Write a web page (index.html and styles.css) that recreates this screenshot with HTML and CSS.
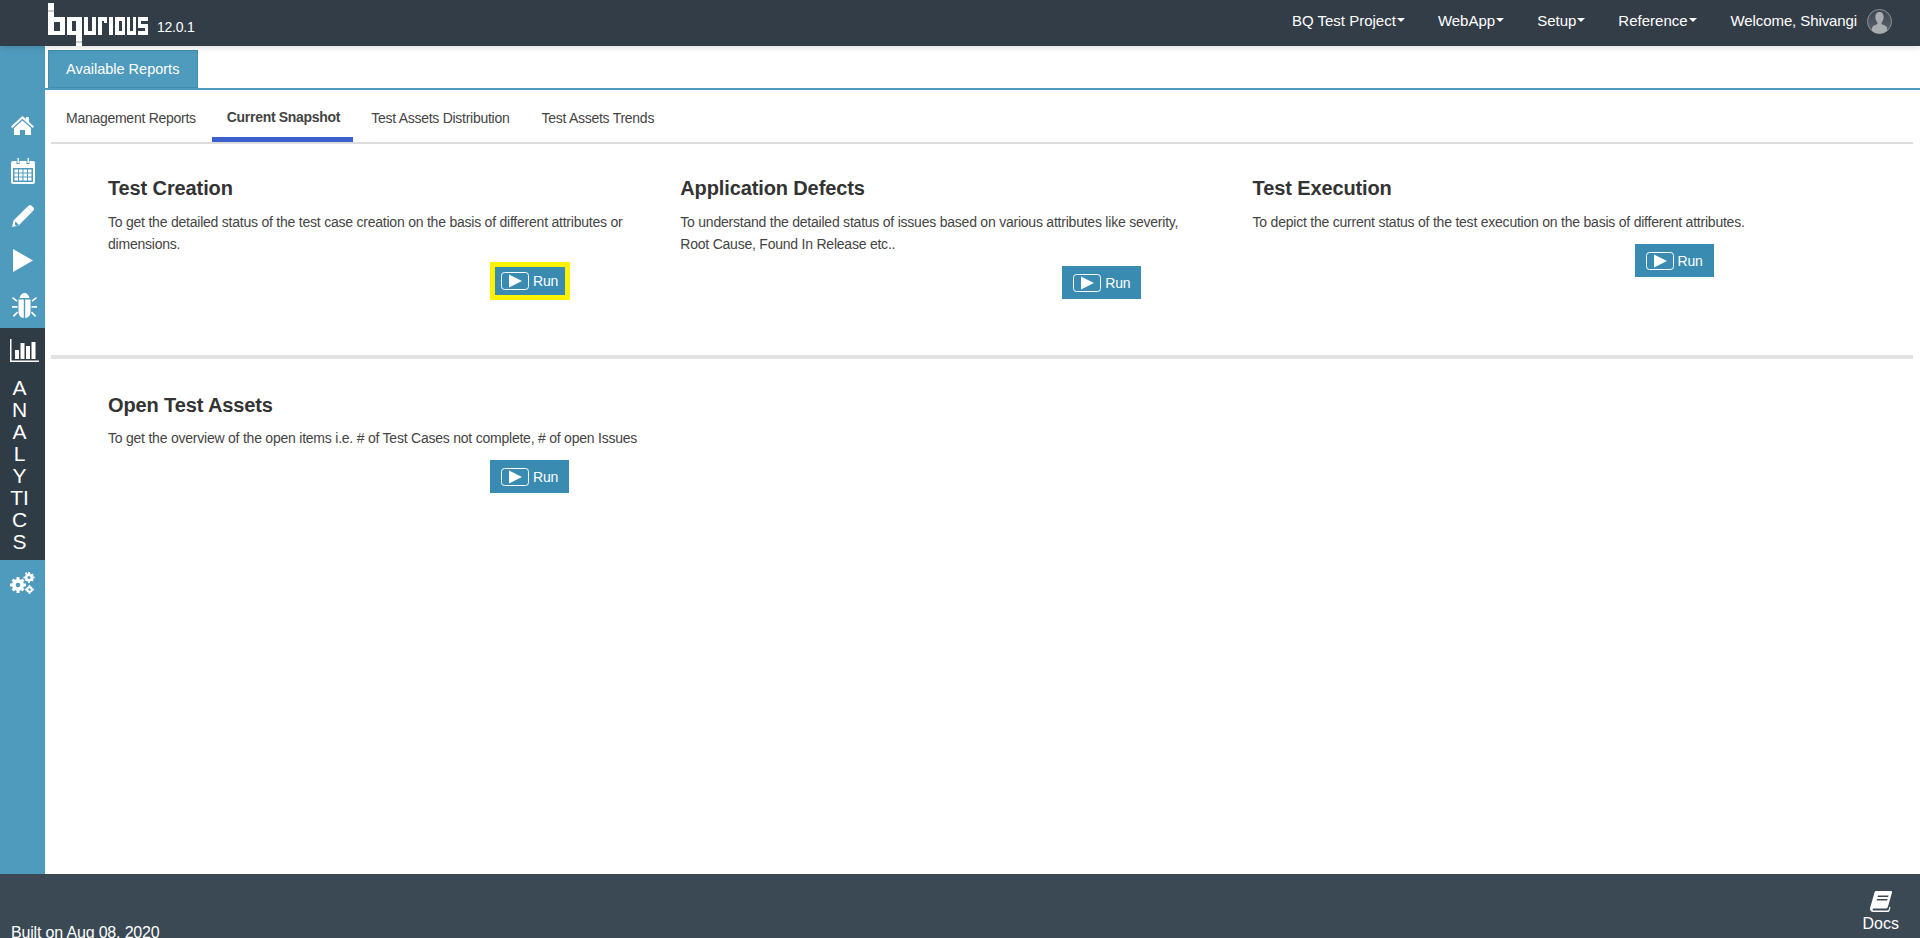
FILE: index.html
```html
<!DOCTYPE html>
<html lang="en">
<head>
<meta charset="utf-8">
<title>Available Reports</title>
<link rel="stylesheet" href="styles.css">
</head>
<body>
<header class="topbar">
  <div class="brand">
    <svg class="logo" viewBox="0 0 100 43" aria-label="bqurious logo">
      <g class="logo-ink">
        <rect x="0" y="0" width="6" height="32"/><rect x="6" y="14" width="10" height="5"/><rect x="6" y="28" width="10" height="4"/><rect x="12" y="14" width="5" height="18"/>
        <rect x="19" y="14" width="15" height="4"/><rect x="19" y="14" width="5" height="18"/><rect x="19" y="28" width="15" height="4"/><rect x="28" y="14" width="6" height="29"/>
        <rect x="36" y="14" width="4" height="18"/><rect x="36" y="28" width="12" height="4"/><rect x="44" y="14" width="4" height="18"/>
        <rect x="50" y="14" width="4" height="18"/><rect x="50" y="14" width="9" height="4"/><rect x="56" y="14" width="3" height="6"/>
        <rect x="61" y="14" width="4" height="18"/>
        <rect x="67" y="14" width="4" height="18"/><rect x="67" y="14" width="10" height="4"/><rect x="67" y="28" width="10" height="4"/><rect x="74" y="14" width="3" height="18"/>
        <rect x="79" y="14" width="3" height="18"/><rect x="79" y="28" width="9" height="4"/><rect x="85" y="14" width="3" height="18"/>
        <rect x="90" y="14" width="10" height="4"/><rect x="90" y="14" width="3" height="11"/><rect x="90" y="21" width="10" height="4"/><rect x="97" y="21" width="3" height="11"/><rect x="90" y="28" width="10" height="4"/>
      </g>
      <rect class="logo-band" x="0" y="7" width="6" height="2"/>
      <rect class="logo-band" x="28" y="38" width="6" height="2"/>
    </svg>
    <span class="version">12.0.1</span>
  </div>
  <nav class="topnav">
    <a class="nav-item">BQ Test Project<i class="caret"></i></a>
    <a class="nav-item">WebApp<i class="caret"></i></a>
    <a class="nav-item">Setup<i class="caret"></i></a>
    <a class="nav-item nav-ref">Reference<i class="caret"></i></a>
    <a class="nav-item nav-user">Welcome, Shivangi</a>
    <svg class="avatar" viewBox="0 0 25 25">
      <defs>
        <linearGradient id="avatarFill" x1="0" y1="0" x2="0" y2="1"><stop offset="0" stop-color="#3d4751"/><stop offset="1" stop-color="#5c646b"/></linearGradient>
        <clipPath id="avatarClip"><circle cx="12.500" cy="12.500" r="12"/></clipPath>
      </defs>
      <circle cx="12.500" cy="12.500" r="12" fill="url(#avatarFill)" stroke="#8b9196"/>
      <path clip-path="url(#avatarClip)" d="M12.500 3c2.800 0 4.200 2.100 4.200 4.900 0 2.300-1.200 4.300-2.100 5.600-.3.900.1 1.700 1.300 2.200l2.400 1c.9.500 1.500 1.300 1.800 2.300v6h-15.200v-6c.3-1 .9-1.800 1.800-2.300l2.400-1c1.200-.5 1.600-1.300 1.300-2.200-.9-1.300-2.100-3.300-2.100-5.600 0-2.800 1.400-4.900 4.200-4.900z" fill="#a9adb0"/>
    </svg>
  </nav>
</header>

<div class="shell">
  <aside class="sidebar">
    <div class="side-item">
      <svg class="ico" width="23" height="19" viewBox="0 0 23 19"><path d="M11.500 0 15 3V1h3v5l5 4.600-1.300 1.400L11.500 2.800 1.300 12 0 10.600z"/><path d="M11.500 4.500 20 12v7h-6v-5H9v5H3v-7z"/></svg>
    </div>
    <div class="side-item">
      <svg class="ico" width="24" height="26" viewBox="0 0 24 26"><path fill-rule="evenodd" d="M2 3h3.500v3h3V3h7v3h3V3H22a2 2 0 0 1 2 2v19a2 2 0 0 1-2 2H2a2 2 0 0 1-2-2V5a2 2 0 0 1 2-2zm0 7v14h20V10zm1.500 1.500h3.500v3H3.500zm4.500 0h3.500v3H8zm4.500 0H16v3h-3.500zm4.500 0h3.500v3H17zM3.500 15.500h3.500v3H3.500zm4.500 0h3.500v3H8zm4.500 0H16v3h-3.500zm4.500 0h3.500v3H17zM3.500 19.500h3.500v3H3.500zm4.500 0h3.500v3H8zm4.500 0H16v3h-3.500zm4.500 0h3.500v3H17z"/><rect x="6.500" y="0" width="1.500" height="5"/><rect x="16.500" y="0" width="1.500" height="5"/></svg>
    </div>
    <div class="side-item">
      <svg class="ico" width="22" height="22" viewBox="0 0 22 22"><path fill-rule="evenodd" d="M15 2 20 7 6.500 20.500 0 22l1.500-6.500zM3.500 16.500l-.8 2.800 2 2 2.800-.8z"/><path d="M16.500.8c.8-.9 2.100-1 3-.1l1.900 1.900c.9.9.8 2.200-.1 3L20 6.900 15.100 2z"/></svg>
    </div>
    <div class="side-item">
      <svg class="ico" width="20" height="23" viewBox="0 0 20 23"><path d="M0 0 20 11.500 0 23z"/></svg>
    </div>
    <div class="side-item side-item-bug">
      <svg class="ico" width="25" height="26" viewBox="0 0 25 26"><path d="M7.500 5c.6-3 2.700-5 5-5s4.400 2 5 5z"/><path d="M6.500 6.500h5.300V25c-3.300-.4-5.300-2.500-5.300-6zM13.200 6.500h5.300V19c0 3.500-2 5.600-5.300 6z"/><path d="M0 13h5.500v1.800H0zM1 4l4.500 3.500-1 1.300L0 5.300zM24 4l1 1.300-4.500 3.500-1-1.300zM19.500 13H25v1.800h-5.500zM5 18.500l1 1.300L2 24l-1.200-1.200zM20 18.500l4.200 4.300L23 24l-4-4.200z"/></svg>
    </div>
    <div class="side-active">
      <svg class="chart" width="29" height="23" viewBox="0 0 29 23"><rect x="0" y="0" width="1.500" height="23"/><rect x="0" y="21.500" width="29" height="1.500"/><rect x="5" y="11" width="4" height="9"/><rect x="10.500" y="4" width="4" height="16"/><rect x="16" y="7" width="4" height="13"/><rect x="21.500" y="3" width="4" height="17"/></svg>
      <div class="side-label">ANALYTICS</div>
    </div>
    <div class="side-item side-item-gears">
      <svg class="ico" width="26" height="22" viewBox="0 0 26 22"><circle cx="9" cy="13" r="6"/><path d="M7.500 5h3v3h-3zM7.500 18h3v3h-3zM1 11.500h3v3H1zM14 11.500h3v3h-3zM2.600 8.700l2.100-2.100 2 2-2.100 2.100zM11.400 17.400l2.100-2.100 2 2-2.100 2.100zM2.600 17.300l2-2 2.100 2.100-2 2zM11.400 8.600l2-2 2.100 2.100-2 2z"/><circle class="gear-hole" cx="9" cy="13" r="2.300"/><circle cx="20" cy="5.500" r="4"/><path d="M19 0h2v2h-2zM19 9h2v2h-2zM14.500 4.500h2v2h-2zM23.500 4.500h2v2h-2zM15.800 1.400l1.400-1.400 1.400 1.400-1.400 1.400zM22 8l1.400-1.400 1.400 1.400-1.400 1.400zM22 3l1.400-1.400L24.800 3l-1.400 1.400zM15.800 8l1.400-1.400L18.600 8l-1.400 1.400z"/><circle class="gear-hole" cx="20" cy="5.500" r="1.500"/><circle cx="20.500" cy="17.500" r="3.300"/><path d="M19.700 13h1.600v1.800h-1.600zM19.700 20.200h1.600V22h-1.600zM16 16.700h1.800v1.600H16zM23.200 16.700H25v1.600h-1.800z"/><circle class="gear-hole" cx="20.500" cy="17.500" r="1.200"/></svg>
    </div>
  </aside>

  <main class="main">
    <div class="tabstrip">
      <div class="tab">Available Reports</div>
    </div>
    <ul class="subtabs">
      <li class="subtab subtab-first">Management Reports</li>
      <li class="subtab subtab-active">Current Snapshot</li>
      <li class="subtab">Test Assets Distribution</li>
      <li class="subtab">Test Assets Trends</li>
    </ul>
    <section class="report-row report-row-top">
      <article class="report">
        <h3 class="report-title">Test Creation</h3>
        <p class="report-desc">To get the detailed status of the test case creation on the basis of different attributes or dimensions.</p>
        <button class="run run-highlight"><svg class="run-ico" viewBox="0 0 28 18"><rect x=".5" y=".5" width="27" height="17" rx="3"/><path class="run-tri" d="M8 2.500 21 9 8 15.500z"/></svg>Run</button>
      </article>
      <article class="report">
        <h3 class="report-title">Application Defects</h3>
        <p class="report-desc">To understand the detailed status of issues based on various attributes like severity, Root Cause, Found In Release etc..</p>
        <button class="run"><svg class="run-ico" viewBox="0 0 28 18"><rect x=".5" y=".5" width="27" height="17" rx="3"/><path class="run-tri" d="M8 2.500 21 9 8 15.500z"/></svg>Run</button>
      </article>
      <article class="report">
        <h3 class="report-title">Test Execution</h3>
        <p class="report-desc">To depict the current status of the test execution on the basis of different attributes.</p>
        <button class="run"><svg class="run-ico" viewBox="0 0 28 18"><rect x=".5" y=".5" width="27" height="17" rx="3"/><path class="run-tri" d="M8 2.500 21 9 8 15.500z"/></svg>Run</button>
      </article>
    </section>
    <hr class="divider">
    <section class="report-row report-row-bottom">
      <article class="report">
        <h3 class="report-title">Open Test Assets</h3>
        <p class="report-desc">To get the overview of the open items i.e. # of Test Cases not complete, # of open Issues</p>
        <button class="run"><svg class="run-ico" viewBox="0 0 28 18"><rect x=".5" y=".5" width="27" height="17" rx="3"/><path class="run-tri" d="M8 2.500 21 9 8 15.500z"/></svg>Run</button>
      </article>
    </section>
  </main>
</div>

<footer class="footer">
  <span class="built">Built on Aug 08, 2020</span>
  <div class="docs">
    <svg class="docs-ico" width="22" height="21" viewBox="0 0 22 21"><path fill-rule="evenodd" d="M6 0h15c.9 0 1.200.7 1 1.500l-4 14c-.4 1.500-1.200 2-2.500 2H4c-1 0-1.500.5-1.500 1s.5 1 1.500 1h13.500c.6 0 1-.4 1.200-1l.8-2.800 1 .6-1 3.400c-.2.800-1 1.300-1.800 1.300H3.500C1.500 21 0 19.800 0 18c0-.6.100-1.100.3-1.700L4.500 1.500C4.700.6 5.200 0 6 0zm2 4.500-.4 1.500h10.500l.4-1.500zM7 8l-.4 1.500h10.500L17.500 8z"/></svg>
    <span>Docs</span>
  </div>
</footer>
</body>
</html>
```
FILE: styles.css
```css
* { box-sizing: border-box; }
html, body { margin: 0; height: 938px; overflow: hidden; }
body {
  display: flex;
  flex-direction: column;
  font-family: "Liberation Sans", Arial, sans-serif;
  font-size: 14px;
  color: #333;
  background: #fff;
}

/* top bar */
.topbar {
  flex: 0 0 46px;
  height: 46px;
  display: flex;
  justify-content: space-between;
  background: #333d48;
  color: #fff;
  position: relative;
  z-index: 2;
  box-shadow: 0 2px 6px rgba(0, 0, 0, .12);
}
.brand { display: flex; padding: 3px 0 0 48px; }
.logo { width: 100px; height: 43px; display: block; }
.logo-ink { fill: #fff; }
.logo-band { fill: #c9ccce; }
.version { font-size: 14px; letter-spacing: -.25px; margin: 16px 0 0 9px; }
.topnav { display: flex; align-items: center; padding: 0 28px 6px 0; }
.nav-item { display: flex; align-items: center; font-size: 15px; color: #fff; margin-right: 33px; }
.nav-ref { margin-right: 34px; }
.nav-user { margin-right: 9px; letter-spacing: -.1px; }
.caret {
  width: 0; height: 0; margin-left: 1px;
  border-left: 4px solid transparent;
  border-right: 4px solid transparent;
  border-top: 4px solid #fff;
}
.avatar { width: 25px; height: 25px; display: block; margin: 2px 0 0 1px; }

/* shell */
.shell { flex: 0 0 828px; height: 828px; display: flex; }
.sidebar { flex: 0 0 45px; width: 45px; padding-top: 57px; background: #4f9bbd; }
.side-item { height: 45px; display: flex; align-items: center; justify-content: center; }
.side-item-bug { padding-left: 4px; }
.side-item-gears { padding-right: 1px; }
.ico { fill: #fff; display: block; }
.side-active {
  height: 232px;
  background: #2f3b45;
  color: #fff;
  display: flex;
  flex-direction: column;
  align-items: flex-start;
  padding-top: 11px;
}
.chart { fill: #fff; display: block; margin-left: 10px; }
.side-label {
  width: 21px;
  margin: 15px 0 0 9px;
  font-size: 21px;
  line-height: 22px;
  text-align: center;
  word-break: break-all;
}
.gear-hole { fill: #4f9bbd; }

/* main */
.main { flex: 1; min-width: 0; padding-top: 4px; }
.tabstrip { height: 40px; padding-left: 3px; border-bottom: 2px solid #4f9bbd; }
.tab {
  width: 150px;
  height: 38px;
  padding-left: 17px;
  font-size: 14.5px;
  line-height: 37px;
  color: #fff;
  background: #4f9bbd;
  border: 1px solid #3f8fae;
}
.subtabs {
  display: flex;
  list-style: none;
  margin: 0 7px 0 6px;
  padding: 0;
  height: 54px;
  border-bottom: 2px solid #ddd;
}
.subtab { height: 52px; margin-left: 18px; padding-top: 20px; color: #444; letter-spacing: -.27px; }
.subtab + .subtab + .subtab + .subtab { margin-left: 32px; }
.subtab-first { margin-left: 15px; }
.subtab-active {
  margin-left: 16px;
  padding: 19px 13px 0 15px;
  font-weight: bold;
  letter-spacing: -.3px;
  border-bottom: 5px solid #3b5fcc;
}

.report-row { display: grid; grid-template-columns: repeat(3, 572.3px); padding: 0 0 0 63px; }
.report-row-top { height: 211px; padding-top: 33px; }
.report-row-bottom { padding-top: 35px; }
.report-row-bottom .report-desc { margin-top: 11px; }
.report { width: 530px; }
.report-title { margin: 0; font-size: 20px; letter-spacing: -.12px; line-height: 22px; font-weight: bold; color: #333; }
.report-desc { margin: 12px 0 0; line-height: 22px; letter-spacing: -.225px; color: #444; }
.run {
  display: flex;
  align-items: center;
  width: 79px;
  height: 33px;
  margin: 11px 0 0 382px;
  padding: 0 0 0 11px;
  border: 0;
  border-radius: 0;
  background: #3a8bb1;
  color: #fff;
  font: 14px "Liberation Sans", Arial, sans-serif;
  letter-spacing: -.2px;
}
.run-ico { width: 28px; height: 18px; margin-right: 4px; flex: none; }
.run-ico rect { fill: none; stroke: #fff; }
.run-tri { fill: #fff; }
.run-highlight {
  width: 80px;
  height: 38px;
  margin-top: 7px;
  padding-left: 6px;
  border: 5px solid #fff200;
}
.divider { margin: 0 7px 0 6px; height: 4px; border: 0; background: #e2e2e2; }

/* footer */
.footer {
  flex: 0 0 64px;
  height: 64px;
  display: flex;
  justify-content: space-between;
  background: #3b4955;
  color: #fff;
  font-size: 16px;
  overflow: hidden;
}
.built { padding: 50px 0 0 11px; letter-spacing: -.17px; }
.docs { display: flex; flex-direction: column; align-items: center; padding: 17px 21px 0 0; }
.docs-ico { fill: #fff; display: block; margin-bottom: 3px; }
```
